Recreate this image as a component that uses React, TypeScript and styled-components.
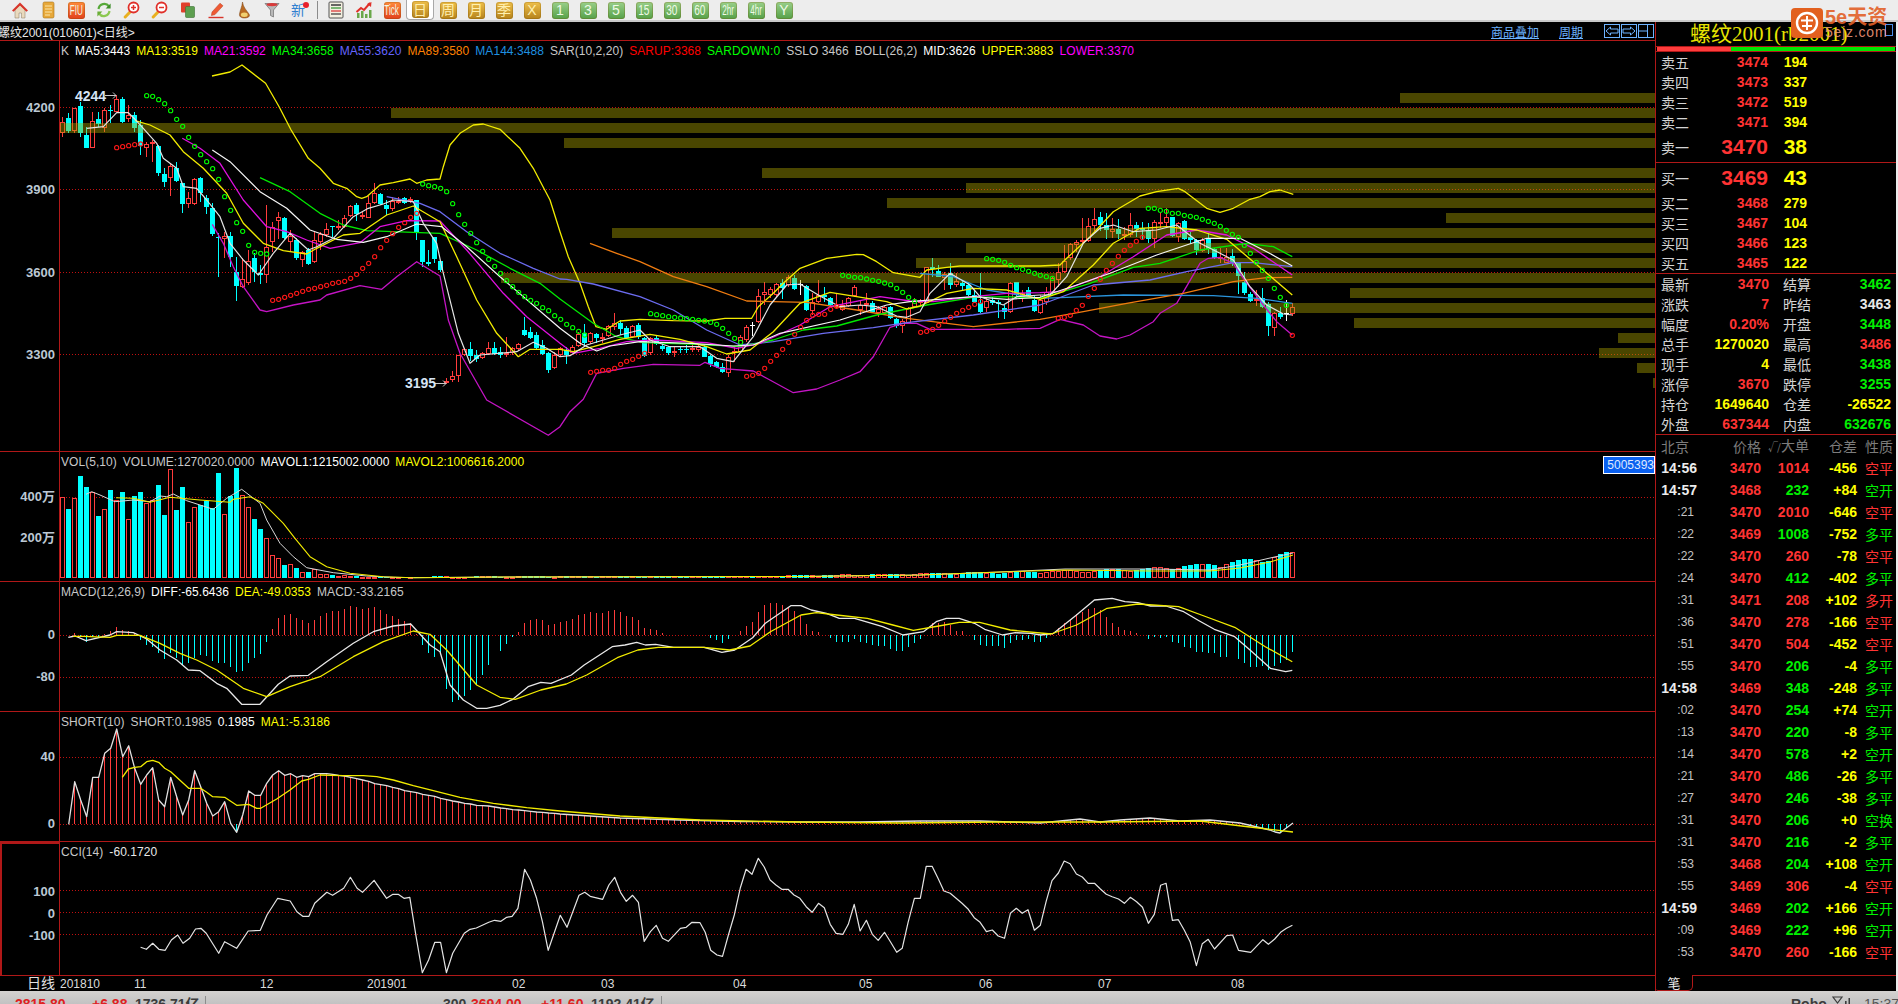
import React from "react";
import styled, { createGlobalStyle } from "styled-components";

/* ---------- data helpers ---------- */
type Pt = [number, number];
const conv = (flat: number[], ox: number, oy: number, sx = 3, sy = 3): Pt[] => {
  const out: Pt[] = [];
  for (let i = 0; i < flat.length; i += 2) out.push([ox + flat[i] / sx, oy + flat[i + 1] / sy]);
  return out;
};
const z7 = (f: number[]) => conv(f, 60, 80);
const z9 = (f: number[]) => conv(f, 540, 240);
const z8 = (f: number[]) => conv(f, 1000, 180);
const chain = (...segs: Pt[][]): Pt[] => {
  const out: Pt[] = [];
  segs.forEach((s) =>
    s.forEach((pt) => {
      if (!out.length || pt[0] > out[out.length - 1][0]) out.push(pt);
    })
  );
  return out;
};
const pstr = (p: Pt[]) => p.map(([x, y]) => `${x.toFixed(1)},${y.toFixed(1)}`).join(" ");
const interp = (s: Pt[], x: number) => {
  for (let i = 1; i < s.length; i++) {
    if (x <= s[i][0]) {
      const t = (x - s[i - 1][0]) / (s[i][0] - s[i - 1][0]);
      return s[i - 1][1] + t * (s[i][1] - s[i - 1][1]);
    }
  }
  return s[s.length - 1][1];
};

/* ---------- candles: type (1 red, 0 cyan, 2 white), top, bottom, high, low ---------- */
type C = [number, number, number, number, number];
const candlesA: C[] = [
  [1,125,158,110,170],[0,115,152,100,160],[1,85,152,85,160],[0,78,158,65,172],[0,165,203,140,203],[1,122,203,95,203],[0,118,133,95,140],[1,90,143,85,155],[0,91,93,75,130],[1,58,95,45,95],
  [0,58,125,50,128],[1,105,118,75,125],[0,105,143,95,155],[0,135,198,120,225],[1,193,205,185,232],[1,187,193,180,245],[0,198,278,195,288],[0,283,305,265,320],[1,258,295,250,347],[0,263,303,245,305],
  [0,310,373,310,398],[1,355,372,335,385],[1,298,372,295,375],[0,295,338,290,365],[0,353,381,345,402],[0,385,463,370,468],[0,471,473,458,590],[1,468,478,455,535],[0,468,530,455,560],[0,577,618,530,662],
  [1,597,622,535,625],[1,542,610,510,615],[0,535,575,520,605],[0,580,585,555,612],[1,500,585,375,608],[1,440,487,425,515],[1,410,422,395,478],[0,415,475,410,478],[1,468,485,450,515],[0,480,533,475,540],
  [1,515,540,512,560],[0,510,552,505,555],[1,480,545,455,550],[1,462,485,455,510],[1,447,465,430,470],[0,439,441,440,470],[1,438,442,420,450],[1,415,440,405,445],[1,378,407,375,410],[0,375,403,370,422],
  [1,405,410,395,418],[1,368,413,348,415],[1,340,370,310,372],[0,343,372,338,375],[0,375,387,360,405],[1,362,388,350,392],[1,362,367,350,372],[0,355,368,352,372],[1,358,362,352,368],[0,360,457,360,480],
  [0,480,545,480,560],[0,545,553,510,558],[0,472,538,470,550],[0,543,570,543,575],[1,903,910,895,913],[1,887,900,873,905],[1,825,887,825,905],[1,808,825,805,828],[0,808,828,785,843],[0,825,838,810,845],
  [1,818,835,815,838],[1,805,822,785,825],[0,803,822,785,825],[0,817,825,800,835],[1,818,822,770,830],[1,805,820,800,825],[1,793,807,790,812],[0,750,765,710,768],[0,757,773,740,778],[0,765,805,755,808],
  [0,795,822,780,825],[0,820,870,815,880],[1,825,865,815,868],
];
const candlesB: C[] = [
  [1,325,345,320,350],[0,330,345,320,372],[1,320,338,315,340],[1,282,318,275,320],[0,278,310,252,315],[1,280,305,275,312],[0,282,295,278,310],[1,290,295,280,310],[1,258,288,255,292],[1,248,262,220,270],
  [0,248,268,240,285],[0,265,295,258,298],[1,258,290,255,293],[0,255,292,250,298],[0,295,347,290,352],[1,295,340,290,345],[0,295,312,285,315],[0,318,326,310,332],[0,320,340,318,345],[1,332,335,318,350],
  [0,327,329,318,340],[0,327,329,315,340],[1,325,330,305,335],[1,320,330,315,335],[0,320,350,315,352],[0,348,372,345,380],[0,367,380,362,385],[0,382,395,370,398],[1,352,398,345,410],[1,332,340,320,365],
  [1,292,335,285,340],[1,262,300,255,305],[2,256,258,245,287],[1,168,245,148,248],[1,155,165,125,195],[1,148,165,140,175],[1,132,165,130,170],[0,130,145,118,178],[1,110,135,105,140],[0,115,148,105,150],
  [2,131,133,120,165],[0,138,210,136,212],[1,185,212,160,225],[1,165,185,120,190],[0,165,170,142,185],[0,175,195,172,200],[1,195,200,160,208],[1,195,210,180,212],[1,175,198,170,200],[1,142,168,135,172],
  [1,195,210,180,225],[1,188,192,158,215],[0,190,215,182,218],[1,208,220,198,232],[1,202,218,198,222],[0,202,235,198,238],[0,238,257,235,265],[1,242,258,238,278],[1,204,248,200,250],[1,182,202,175,205],
  [1,182,188,178,200],[1,82,188,80,190],[0,82,87,55,110],[0,93,110,75,112],[1,103,115,95,150],[0,100,135,70,148],[1,122,135,100,140],[0,130,137,120,152],[0,135,165,125,168],[0,165,187,150,190],
  [0,190,217,100,220],[1,182,205,170,215],[0,180,190,170,195],[0,185,192,180,235],[0,203,215,195,237],[1,130,215,125,218],[0,127,165,125,168],[1,160,170,150,185],[0,150,165,140,172],[0,180,212,165,215],
];
const candlesC: C[] = [
  [1,360,398,345,402],[1,335,365,320,375],[1,295,340,290,345],[1,277,300,250,320],[1,243,277,195,280],[1,192,235,188,240],[1,185,195,180,215],[1,180,187,115,190],[1,138,183,115,185],[1,118,138,85,152],
  [0,112,135,95,152],[0,135,150,100,177],[1,147,155,115,175],[0,148,163,118,178],[1,162,167,140,180],[1,136,165,100,172],[0,135,148,125,170],[0,145,150,125,180],[0,150,178,130,190],[1,126,176,120,205],
  [1,125,130,100,145],[1,110,130,85,140],[0,112,168,110,170],[1,130,172,125,185],[0,122,178,120,180],[0,172,180,155,190],[0,180,210,178,225],[1,180,212,175,215],[0,175,207,160,222],[0,208,235,203,238],
  [1,232,238,205,248],[1,230,248,205,250],[0,228,250,208,258],[0,250,288,248,342],[0,305,340,275,345],[0,342,363,335,365],[1,358,362,330,378],[0,355,382,325,385],[0,372,438,365,468],[1,400,443,395,468],
  [0,398,410,380,418],[2,400,402,360,422],[1,382,402,370,408],
];
const candles = [
  ...candlesA.map((c) => ({ t: c[0], a: 80 + c[1] / 3, b: 80 + c[2] / 3, h: 80 + c[3] / 3, l: 80 + c[4] / 3 })),
  ...candlesB.map((c) => ({ t: c[0], a: 240 + c[1] / 3, b: 240 + c[2] / 3, h: 240 + c[3] / 3, l: 240 + c[4] / 3 })),
  ...candlesC.map((c) => ({ t: c[0], a: 180 + c[1] / 3, b: 180 + c[2] / 3, h: 180 + c[3] / 3, l: 180 + c[4] / 3 })),
];

/* volume-at-price rows: [top, left] */
const bars: Pt[] = [
  [93, 1400], [108, 391], [123, 60], [138, 564], [168, 762], [183, 966], [198, 887], [213, 1446], [228, 612], [243, 966],
  [258, 916], [273, 501], [288, 1350], [303, 1099], [318, 1354], [333, 1618], [348, 1599], [363, 1637], [378, 1653],
];

const upper = chain(
  [[212, 76], [230, 72], [242, 65]],
  conv([490, 250, 515, 320, 537, 390], 0, 0, 1.845, 3),
  z7([640,45,680,125,745,235,780,265,820,310,860,325,890,350,905,355,920,350,960,315,1000,308,1050,297,1070,310,1100,300,1140,297,1150,260,1170,195,1200,160,1240,135,1270,132,1320,148,1380,205,1420,265,1470,360,1500,455]),
  z9([85,50,120,130,145,200,168,260,200,268,240,243,300,238,400,242,500,243,555,235,635,235,655,200,700,160,730,130,780,85,860,55,950,43,970,44,1010,65,1060,98,1140,112,1160,90,1220,82,1260,78,1400,78,1500,78]),
  z8([180,255,200,235,270,170,340,95,420,48,470,35,535,25,555,35,620,85,660,97,700,85,750,58,780,50,810,35,840,30,880,43])
);
const lower = chain(
  z7([457,433,490,490,520,560,550,620,600,690,620,695,700,675,780,660,800,645,900,617,965,628,1010,590,1070,545,1140,588,1150,640,1165,720,1200,820,1280,960]),
  z9([25,586,60,560,90,515,130,478,170,400,250,385,340,373,480,376,495,367,540,385,640,393,680,415,760,458,830,447,900,420,960,395,1000,350,1050,262,1090,250,1130,250,1170,268,1300,268,1400,268,1500,265]),
  z8([180,418,250,435,300,468,350,477,390,465,460,425,480,400,530,370,600,250,625,235,660,232,700,250,730,295,790,375,830,425,877,465])
);
const ma5 = chain(
  z7([80,145,130,140,170,98,205,98,225,118,250,145,290,190,310,235,350,265,370,320,410,325,440,360,480,410,510,490,550,540,595,585,640,520,690,460,745,510,770,500,820,475,880,410,925,385,970,372,1000,360,1060,365,1090,430,1130,490,1145,560,1165,640,1195,760,1230,850,1260,825,1370,815,1420,787,1460,805,1500,830]),
  z9([40,332,90,347,140,315,240,285,300,270,330,300,390,320,480,320,530,355,580,365,640,290,690,195,740,135,780,132,840,168,900,200,960,195,1010,200,1070,228,1100,232,1140,215,1170,160,1230,100,1290,135,1320,170,1390,195,1430,170,1500,165]),
  z8([150,345,200,290,250,190,300,145,340,135,400,155,470,150,530,135,600,190,660,220,700,240,750,320,800,375,850,402,877,405])
);
const ma13 = chain(
  z7([225,122,270,135,330,165,370,215,430,265,500,340,550,430,610,490,670,512,740,522,770,505,850,465,900,460,980,405,1060,378,1140,425,1190,530,1250,660,1310,760,1375,830,1410,808,1500,808]),
  z9([100,335,160,320,240,298,330,283,420,298,500,320,560,342,630,330,700,275,780,190,870,157,950,170,1040,185,1100,207,1140,198,1220,160,1300,145,1400,150,1500,178]),
  z8([190,335,280,255,340,190,420,145,500,140,590,150,680,178,760,245,877,345])
);
const ma21 = chain(
  z7([367,175,420,205,480,250,550,360,620,440,680,455,740,480,810,505,900,488,960,440,1040,422,1140,423,1220,510,1330,640,1400,710,1500,790]),
  z9([60,320,100,340,180,325,260,305,340,300,440,305,500,308,590,325,660,310,780,255,870,200,960,182,1020,170,1110,183,1180,185,1300,170,1400,160,1500,158]),
  z8([180,335,300,290,400,230,500,165,590,150,680,165,760,205,877,285])
);
const ma34 = chain(
  z7([600,293,690,335,780,400,850,435,920,452,1060,457,1140,460,1250,510,1350,565,1440,610,1500,657]),
  z9([60,185,160,250,230,290,310,308,450,312,600,320,700,300,790,270,890,258,1010,225,1160,195,1300,172,1400,170,1500,175]),
  z8([270,310,400,262,480,250,600,210,740,190,820,200,877,230])
);
const ma55 = chain(
  z7([980,350,1080,370,1140,395,1220,455,1320,520,1420,565,1500,597]),
  z9([80,118,160,132,300,170,400,210,500,270,600,315,700,305,850,280,1000,263,1100,248,1300,225,1500,195]),
  z8([280,315,450,300,560,275,700,248,760,248,877,260])
);
const ma89 = chain(
  z9([150,10,230,40,300,65,400,110,500,140,620,183,800,187,950,210,1100,235,1300,260,1500,238]),
  z8([250,395,380,370,550,340,700,305,800,293,877,292])
);
const ma144 = chain(
  z9([1140,100,1240,110,1340,150,1500,175]),
  z8([200,352,370,345,640,347,770,355,877,370])
);
const mid = chain(
  z7([457,210,510,245,600,335,680,385,750,450,830,478,910,487,980,470,1070,432,1145,440,1220,500,1320,590,1500,745]),
  z9([60,270,120,310,170,333,210,318,300,305,450,310,580,318,640,315,720,280,900,240,1040,195,1110,185,1300,170,1400,178,1500,172]),
  z8([230,315,330,280,470,225,620,175,720,175,800,215,877,258])
);
const sarGreen: Pt[] = [
  ...z7([260,47,278,49,296,59,314,71,332,92,350,118,368,139,386,172,404,199,422,224,440,245,458,266,476,298,494,350,512,391,530,428,548,454,566,496,584,517,602,520,620,522]),
  ...z7([1088,312,1106,317,1124,320,1142,325,1160,335,1178,371,1196,404,1214,433,1232,460,1250,488,1268,514,1286,538,1304,559,1322,580,1340,602,1358,620,1376,637,1394,650,1412,661,1430,670]),
  ...z9([8,203,26,212,44,227,62,238,80,253,98,263,116,274,134,285]),
  ...z9([332,221,350,224,368,227,386,230,404,232,422,234,440,236,458,238,476,241,494,243,512,247,530,253,548,265,566,280,584,295,602,307]),
  ...z9([908,106,926,109,944,112,962,113,980,117,998,121,1016,124,1034,129,1052,134,1070,145,1088,157,1106,172,1124,184]),
  ...z9([1340,56,1358,58,1376,61,1394,67,1412,76,1430,83,1448,88,1466,94,1484,100]),
  ...z8([121,286,139,290,157,295]),
  ...z8([445,85,463,85,481,91,499,94,517,100,535,100,553,106,571,109,589,112,607,118,625,124,643,130,661,139,679,151,697,163,715,172,733,196,751,220,769,247,787,271,805,295,823,325,841,352,859,376]),
];
const sarRed: Pt[] = [
  ...z7([170,203,188,200,206,197,224,194,242,192]),
  ...z7([638,661,656,658,674,652,692,646,710,640,728,634,746,628,764,625,782,620,800,616,818,610,836,607,854,604,872,595,890,583,908,565,926,550,944,530,962,503,980,481,998,461,1016,442,1034,428,1052,412,1070,400]),
  ...z9([152,397,170,394,188,391,206,391,224,385,242,373,260,364,278,358,296,349,314,340]),
  ...z9([620,409,638,406,656,400,674,385,692,364,710,346,728,328,746,307,764,283,782,262,800,241,818,226,836,223,854,223,872,208,890,199]),
  ...z9([1142,277,1160,274,1178,268,1196,256,1214,244,1232,232,1250,220,1268,211,1286,202,1304,193,1322,184]),
  ...z8([175,415,193,412,211,406,229,391,247,376,265,349,283,325,301,298,319,271,337,250,355,229,373,211,391,196,409,184,427,172,877,466]),
];

/* volume */
const volTops = [172,207,175,108,141,155,228,208,150,180,156,238,168,156,190,181,135,225,88,210,141,247,202,195,182,205,99,222,168,84,166,202,237,267,295,345,355,375,372,385,396,396,388,402,402,405,407,405,407,409];
const volProfile = chain([[50,1],[110,1.5],[130,3],[160,6],[180,9],[195,16],[205,25]]);
const volBars = candles.map((c, i) => {
  const base = 577.6;
  let top: number;
  if (i < volTops.length) top = 440 + volTops[i] / 3;
  else {
    const jit = 0.7 + 0.35 * Math.abs(Math.sin(i * 12.9898));
    top = base - Math.max(1, interp(volProfile, i) * jit);
  }
  return { t: c.t === 1 ? 1 : 0, x: 60 + 6 * i, top, base };
});
const volMa5 = chain(
  conv([258,163,275,155,300,165,345,185,400,180,450,185,480,168,500,170,520,162,560,182,600,195,640,208,680,175,725,148,780,190,800,240,840,310,880,350,920,383,1000,398,1100,408,1180,412,1240,413], 0, 440),
  [[500,577],[800,576.5],[920,575],[1000,572],[1065,569],[1150,569],[1210,570],[1240,565],[1270,558],[1293,553]]
);
const volMa10 = chain(
  conv([348,173,400,175,450,187,510,172,600,180,690,187,700,178,750,170,790,190,850,250,885,295,930,350,980,380,1050,400,1150,410,1240,413], 0, 440),
  [[500,577],[800,576.5],[920,575],[1000,572],[1065,570],[1150,571],[1210,571],[1240,568],[1270,562],[1293,555]]
);

/* MACD */
const macdHist: Pt[] = [
  ...conv([222,580,240,590,258,605,276,592,294,592,312,583,330,574,348,562,366,571,384,573,402,580,420,600,438,614,456,620,474,640,492,658,510,640,528,655,546,675,564,670,582,655,600,645,618,648,636,662,654,668,672,668,690,680,708,695,726,692,744,668,762,654,780,641,798,605,816,567,834,534,852,525,870,522,888,534,906,540,924,549,942,540,960,528,978,519,996,514,1014,513,1032,507,1050,498,1068,501,1086,507,1104,504,1122,501,1140,510,1158,522,1176,528,1194,537,1212,543,1230,550,1248,582,1266,616,1284,640,1302,652,1320,640,1338,746,1356,785,1374,780,1392,767,1410,750,1428,735,1446,705,1464,675], 0, 440),
  ...conv([1,183,13,162,25,140,37,126,48,100,60,90,72,87,84,90,96,105,107,103,119,96,131,94,143,87,154,75,166,72,178,67,190,70,202,68,213,63,225,60,237,67,249,78,260,82,272,90,284,113,296,116,307,120,319,130,412,145,424,150,436,158,448,147,470,122,482,107,494,95,506,65,518,45,530,40,542,40,554,45,566,50,578,62,590,75,600,102,612,122,624,125,648,143,660,157,672,155,684,157,695,148,706,157,718,160,730,166,742,167,754,167,766,178,778,183,790,183,800,170,812,160,824,147,848,100,860,100,872,97,884,105,895,122,907,122,930,150,942,166,954,167,965,167,977,167,989,174,1001,160,1012,150,1024,150,1036,148,1048,155,1060,155,1070,143,1084,130,1096,115,1108,100,1120,90,1132,72,1144,65,1152,58,1164,55,1176,60,1188,80,1200,100,1212,112,1224,120,1236,122,1248,130,1272,147,1284,142,1296,145,1308,140,1320,155,1332,158,1344,170,1356,175,1368,187,1380,187,1392,190,1402,190,1414,200,1426,200,1448,208,1460,218,1472,232,1484,232,1496,228,1508,240,1520,228,1532,220,1544,210,1556,187], 500, 590, 1.96, 3),
];
const macdW = chain(
  conv([205,592,225,588,258,602,330,585,350,575,400,578,440,597,480,630,530,660,565,690,600,692,650,730,680,745,725,793,780,793,835,733,870,708,925,706,980,665,1060,610,1120,575,1180,558,1232,552,1290,615,1320,635,1350,735,1390,780,1430,805,1460,805,1500,796], 0, 440),
  conv([25,328,55,290,80,277,100,280,140,255,165,225,220,170,245,165,268,157,285,165,305,163,340,172,400,172,435,187,460,180,495,143,520,100,570,47,590,47,610,60,640,70,665,85,695,85,750,110,790,135,830,125,855,95,875,85,900,85,930,100,950,118,985,135,1010,128,1040,130,1060,135,1085,130,1130,75,1165,30,1200,25,1225,35,1250,38,1275,48,1305,48,1340,65,1370,92,1400,118,1440,140,1470,180,1510,235,1540,245,1553,241], 500, 590, 1.96, 3)
);
const macdY = chain(
  conv([220,589,250,589,330,592,350,586,420,586,480,610,540,640,590,660,650,690,730,745,800,770,870,740,960,710,1060,650,1150,605,1240,573,1290,583,1340,630,1430,735,1500,772], 0, 440),
  conv([30,328,80,300,130,282,170,255,230,203,270,180,310,172,400,172,450,180,490,168,530,125,590,75,620,68,660,75,720,85,770,105,810,121,860,108,900,97,940,97,1000,120,1080,132,1130,105,1190,55,1250,42,1330,50,1380,78,1440,112,1500,170,1553,215], 500, 590, 1.96, 3)
);

/* SHORT */
const shortBase = 824;
const shortW = chain(
  conv([26,328,44,200,62,255,80,305,98,187,116,187,134,115,152,100,170,42,188,125,206,92,224,160,242,208,260,180,278,158,296,255,314,275,332,187,350,245,368,300,386,255,404,167,422,215,440,265,458,303,476,290,494,260,512,325,530,352,548,300,566,228,584,241,602,241,620,205,638,180,656,167,674,181,692,176,710,187,728,182,746,185,764,176,782,176,800,176,818,178,836,181,854,183,872,187,890,191,908,195,926,199,944,206,962,209,980,212,998,217,1016,221,1034,227,1052,230,1070,233,1088,238,1106,241,1124,244,1142,250,1160,254,1178,258,1196,261,1214,265,1232,267,1250,271,1268,272,1286,273,1304,276,1322,279,1340,281,1358,284,1376,285,1394,287,1412,289,1430,291,1448,292,1466,294,1484,295,1500,297], 60, 715),
  [[620,818],[680,820],[740,821.5],[800,822],[860,822],[920,821],[980,821],[1040,823],[1060,821],[1080,819],[1100,822],[1120,820],[1150,818],[1180,821],[1210,820],[1240,823],[1270,830],[1275,832],[1280,833],[1285,829],[1293,823]]
);
const shortY = chain(
  conv([187,187,205,162,224,157,242,155,260,140,278,136,296,142,314,160,332,170,350,187,386,220,422,220,440,232,458,245,494,247,530,271,566,268,590,280,602,280,650,252,690,225,725,198,745,193,780,180,850,182,910,182,950,185,1000,195,1060,212,1120,227,1200,247,1300,265,1400,278,1500,288], 60, 715),
  [[620,816],[700,820],[800,822],[900,823],[1000,822],[1100,822],[1200,821],[1250,827],[1293,832]]
);
const shortBars = candles
  .map((_, i) => 62 + 6 * i)
  .filter((x) => x >= shortW[0][0] + 2)
  .map((x) => ({ x, y: interp(shortW, x + 0.5) }));

/* CCI */
const cci = chain(
  conv([315,322,328,328,342,310,356,328,370,331,384,300,398,285,410,310,425,295,438,267,450,265,462,280,490,340,503,305,530,325,556,273,583,271,598,225,622,175,650,183,665,215,678,229,692,229,705,190,732,157,745,166,770,145,785,112,800,145,812,157,838,121,866,175,880,163,892,163,905,175,918,172,932,290,946,398,960,360,974,307,987,307,1000,398,1014,340,1040,280,1053,268,1067,264,1095,247,1108,241,1122,244,1135,232,1147,229,1160,205,1175,88,1188,120,1202,175,1215,245,1228,331,1255,226,1270,262,1297,166,1310,157,1322,169,1350,178,1364,135,1377,112,1390,157,1403,184,1417,166,1430,187,1443,304,1457,275,1470,256,1484,295,1497,304,1524,265,1537,262,1550,247,1568,248], 0, 840, 2.24, 3),
  conv([155,262,168,316,183,330,196,334,210,270,224,210,238,130,252,73,266,88,281,40,295,66,309,105,323,120,337,133,352,133,366,150,380,160,395,185,409,202,424,175,438,188,452,238,466,265,482,268,495,238,509,178,523,258,538,226,552,268,566,286,581,262,595,290,610,322,623,310,637,232,652,160,666,160,680,64,694,64,708,100,722,138,737,145,751,160,765,175,780,193,794,218,808,232,823,260,837,255,851,273,866,280,880,205,894,190,908,205,922,194,937,256,951,241,965,170,979,107,994,84,1008,48,1022,56,1037,87,1051,96,1065,115,1080,115,1094,132,1108,148,1122,155,1137,162,1151,175,1165,157,1180,170,1194,187,1208,235,1222,208,1237,121,1250,115,1265,226,1279,224,1293,255,1307,290,1322,362,1336,296,1350,283,1365,312,1394,272,1408,270,1422,316,1451,322,1480,284,1493,298,1508,282,1522,262,1536,250,1550,241], 640, 845, 2.376, 3)
);

/* right panel data */
const asks = [["卖五", "3474", "194"], ["卖四", "3473", "337"], ["卖三", "3472", "519"], ["卖二", "3471", "394"]];
const bids = [["买二", "3468", "279"], ["买三", "3467", "104"], ["买四", "3466", "123"], ["买五", "3465", "122"]];
type Tone = "r" | "y" | "g" | "w";
const stats: [string, string, Tone, string, string, Tone][] = [
  ["最新", "3470", "r", "结算", "3462", "g"],
  ["涨跌", "7", "r", "昨结", "3463", "w"],
  ["幅度", "0.20%", "r", "开盘", "3448", "g"],
  ["总手", "1270020", "y", "最高", "3486", "r"],
  ["现手", "4", "y", "最低", "3438", "g"],
  ["涨停", "3670", "r", "跌停", "3255", "g"],
  ["持仓", "1649640", "y", "仓差", "-26522", "y"],
  ["外盘", "637344", "r", "内盘", "632676", "g"],
];
const ticks: [string, string, string, Tone, string, string, Tone][] = [
  ["14:56", "3470", "1014", "r", "-456", "空平", "r"],
  ["14:57", "3468", "232", "g", "+84", "空开", "g"],
  [":21", "3470", "2010", "r", "-646", "空平", "r"],
  [":22", "3469", "1008", "g", "-752", "多平", "g"],
  [":22", "3470", "260", "r", "-78", "空平", "r"],
  [":24", "3470", "412", "g", "-402", "多平", "g"],
  [":31", "3471", "208", "r", "+102", "多开", "r"],
  [":36", "3470", "278", "r", "-166", "空平", "r"],
  [":51", "3470", "504", "r", "-452", "空平", "r"],
  [":55", "3470", "206", "g", "-4", "多平", "g"],
  ["14:58", "3469", "348", "g", "-248", "多平", "g"],
  [":02", "3470", "254", "g", "+74", "空开", "g"],
  [":13", "3470", "220", "g", "-8", "多平", "g"],
  [":14", "3470", "578", "g", "+2", "空开", "g"],
  [":21", "3470", "486", "g", "-26", "多平", "g"],
  [":27", "3470", "246", "g", "-38", "多平", "g"],
  [":31", "3470", "206", "g", "+0", "空换", "g"],
  [":31", "3470", "216", "g", "-2", "多平", "g"],
  [":53", "3468", "204", "g", "+108", "空开", "g"],
  [":55", "3469", "306", "r", "-4", "空平", "r"],
  ["14:59", "3469", "202", "g", "+166", "空开", "g"],
  [":09", "3469", "222", "g", "+96", "空开", "g"],
  [":53", "3470", "260", "r", "-166", "空平", "r"],
];
const toneColor: Record<Tone, string> = { r: "#ff3333", y: "#ffff00", g: "#00f000", w: "#e8e8e8" };
const dateLabels: [number, string][] = [[60, "201810"], [134, "11"], [260, "12"], [367, "201901"], [512, "02"], [601, "03"], [733, "04"], [859, "05"], [979, "06"], [1098, "07"], [1231, "08"]];

/* ---------- styles ---------- */
const RED = "#b01818";
const Global = createGlobalStyle`
  html, body { margin: 0; padding: 0; background: #ebebeb; overflow: hidden; }
  * { box-sizing: border-box; }
`;
const Root = styled.div`
  width: 1898px; height: 1004px; display: flex; flex-direction: column; position: relative; overflow: hidden;
  font-family: "Liberation Sans", "Noto Sans CJK SC", sans-serif; background: #ebebeb;
`;
const Toolbar = styled.header`
  height: 22px; flex: none; display: flex; align-items: flex-start; padding-left: 6px;
  background: #ededed; border-bottom: 2px solid #c9c9c9;
`;
const ToolCell = styled.div<{ $on?: boolean }>`
  width: 28px; height: 20px; flex: none; display: flex; align-items: center; justify-content: center;
  ${(p) => (p.$on ? "background:#fff; border:1px solid #a8a8a8; border-top:none; border-radius:0 0 4px 4px;" : "")}
`;
const ToolDivider = styled.div`
  width: 8px; flex: none; position: relative; height: 20px;
  &::after { content: ""; position: absolute; left: 3px; top: 1px; bottom: 1px; width: 1px; background: #8c8c8c; }
`;
const Tile = styled.span<{ $tone: "gold" | "green" | "orange" }>`
  width: 17px; height: 17px; border-radius: 3px; display: flex; align-items: center; justify-content: center;
  font-size: 14px; line-height: 1; white-space: nowrap; overflow: hidden;
  color: ${(p) => (p.$tone === "gold" ? "#fff0b0" : "#effae6")};
  background: ${(p) =>
    p.$tone === "gold"
      ? "linear-gradient(#eebf4a,#b5831c)"
      : p.$tone === "green"
      ? "linear-gradient(#9ad08a,#55a048)"
      : "linear-gradient(#ff8a3c,#e2401c)"};
  box-shadow: inset 0 0 0 1px rgba(120, 80, 0, 0.25);
`;
const TileText = styled.span<{ $n: number }>`
  display: inline-block; flex: none;
  transform: scaleX(${(p) => (p.$n >= 3 ? 0.58 : p.$n === 2 ? 0.72 : 1)});
`;
const NewGlyph = styled.span`
  position: relative; font-size: 14px; line-height: 1; color: #2f7fd0; width: 18px; text-align: left;
  &::after { content: ""; position: absolute; right: 0; top: -1px; width: 6px; height: 6px; border-radius: 50%; background: #e8202a; }
`;
const Workspace = styled.main`
  height: 969px; flex: none; display: flex; padding-right: 2px; background: #ebebeb;
`;
const ChartColumn = styled.div`
  width: 1655px; flex: none; display: flex; flex-direction: column; background: #000;
`;
const TitleRow = styled.div`
  height: 19px; flex: none; display: flex; align-items: center; border-bottom: 1px solid ${RED};
  color: #e8e8e8; font-size: 12px; white-space: nowrap;
`;
const TitleText = styled.span`flex: 1; padding-top: 1px; margin-left: -2px;`;
const LinkText = styled.a<{ $w: number }>`
  width: ${(p) => p.$w}px; color: #6db3ff; text-decoration: underline; font-size: 12px;
`;
const NavButtons = styled.div`display: flex; gap: 1px; margin-right: 1px;`;
const NavButton = styled.span`
  width: 16px; height: 14px; border: 1px solid #6db3ff; display: flex; align-items: center; justify-content: center;
`;
const Pane = styled.section<{ $h: number }>`
  height: ${(p) => p.$h}px; flex: none; display: flex; border-bottom: 1px solid ${RED};
`;
const AxisCol = styled.div<{ $active?: boolean }>`
  width: 60px; flex: none; position: relative;
  border-right: 1px solid ${RED};
  ${(p) => (p.$active ? `border: 2px solid ${RED}; border-bottom: 0; border-right-width: 1px;` : "")}
`;
const AxisLabel = styled.span`
  position: absolute; right: 4px; transform: translateY(-50%);
  color: #bcc8d4; font: bold 13px/14px "Liberation Sans", "Noto Sans CJK SC", sans-serif; white-space: nowrap;
`;
const PlotCell = styled.div`flex: 1; position: relative; overflow: hidden; min-width: 0;`;
const PlotSvg = styled.svg`display: block; width: 100%; height: 100%; position: absolute; inset: 0;`;
const Legend = styled.div`
  position: absolute; left: 1px; top: 2px; display: flex; gap: 6px; font-size: 12px; line-height: 16px; white-space: nowrap; z-index: 1;
`;
const LegendItem = styled.span<{ $c: string }>`color: ${(p) => p.$c}; letter-spacing: 0.05px;`;
const PriceMark = styled.div`
  position: absolute; color: #d6e4f4; font: bold 14px/16px "Liberation Sans", sans-serif;
`;
const DateRow = styled.div`
  height: 15px; flex: none; display: flex; color: #dcdcdc; font-size: 12px; line-height: 15px;
`;
const DateHead = styled.div`
  width: 60px; flex: none; text-align: right; padding-right: 5px; font-size: 14px; color: #e0e0e0;
`;
const DateTrack = styled.div`flex: 1; position: relative; overflow: hidden;`;
const DateTick = styled.span`position: absolute; top: 1px;`;
const VolumeTag = styled.div`
  position: absolute; right: 0; top: 4px; width: 52px; height: 18px; background: #0a60f0; border: 1px solid #fff;
  color: #dfe9ff; font-size: 12px; line-height: 16px; text-align: right; z-index: 2;
`;

const Panel = styled.aside`
  width: 241px; flex: none; display: flex; flex-direction: column; background: #000; border-left: 1px solid ${RED};
`;
const PanelTitle = styled.div`
  height: 24px; flex: none; display: flex; align-items: center; padding-left: 34px;
  color: #e8e400; font: 21px/24px "Liberation Serif", "Noto Sans CJK SC", serif; white-space: nowrap;
`;
const RatioBar = styled.div`
  height: 6px; flex: none; display: flex; border-top: 1px solid ${RED}; border-bottom: 1px solid ${RED}; padding: 0 1px;
`;
const RatioPart = styled.i<{ $c: string; $w: number }>`
  display: block; height: 100%; width: ${(p) => p.$w}px; background: ${(p) => p.$c};
`;
const BookRow = styled.div<{ $big?: boolean }>`
  height: ${(p) => (p.$big ? 30 : 20)}px; flex: none; display: grid; grid-template-columns: 28px 79px 39px; align-items: center;
  padding-left: 5px; font-weight: bold; font-size: ${(p) => (p.$big ? 21 : 14)}px;
`;
const CnLabel = styled.span<{ $c?: string; $pad?: number }>`
  font: 14px/20px "Noto Sans CJK SC", sans-serif; color: ${(p) => p.$c || "#d4d4d4"}; white-space: nowrap;
  padding-left: ${(p) => p.$pad || 0}px;
`;
const Num = styled.span<{ $c: string }>`
  text-align: right; color: ${(p) => p.$c}; font-weight: bold; font-family: "Liberation Sans", sans-serif; white-space: nowrap;
`;
const HRule = styled.div`height: 1px; flex: none; background: ${RED};`;
const StatRow = styled.div`
  height: 20px; flex: none; display: grid; grid-template-columns: 28px 80px 42px 80px; align-items: center; padding-left: 5px; font-size: 14px;
`;
const TickGrid = styled.div`
  display: grid; grid-template-columns: 41px 64px 48px 48px 36px; grid-auto-rows: 22px; align-items: center; font-size: 14px;
`;
const HeadCell = styled.span<{ $left?: boolean }>`
  color: #7c7c7c; font: 14px/22px "Noto Sans CJK SC", sans-serif; text-align: ${(p) => (p.$left ? "left" : "right")}; white-space: nowrap;
  padding-left: ${(p) => (p.$left ? 5 : 0)}px;
`;
const TinyMark = styled.span`font-size: 10px; letter-spacing: -1px; margin-right: 1px;`;
const TimeCell = styled.span<{ $bold: boolean }>`
  text-align: right; white-space: nowrap; color: ${(p) => (p.$bold ? "#ececec" : "#c4c4c4")};
  font-weight: ${(p) => (p.$bold ? "bold" : "normal")}; font-size: ${(p) => (p.$bold ? 14 : 12)}px;
  padding-right: ${(p) => (p.$bold ? 0 : 3)}px;
`;
const NatureCell = styled.span<{ $c: string }>`
  text-align: right; color: ${(p) => p.$c}; font: 14px/22px "Noto Sans CJK SC", sans-serif; white-space: nowrap;
`;
const TabBar = styled.div`
  margin-top: auto; height: 16px; flex: none; display: flex;
`;
const Tab = styled.div`
  width: 37px; flex: none; text-align: center; color: #e8e8e8; font: 13px/15px "Noto Sans CJK SC", sans-serif;
  border: 1px solid ${RED}; border-top: 0; border-left: 0; border-radius: 0 0 5px 2px;
`;
const TabRest = styled.div`flex: 1; border-top: 1px solid ${RED};`;

const Taskbar = styled.footer`
  height: 13px; flex: none; display: flex; overflow: hidden; padding-left: 15px; padding-top: 5px;
  background: linear-gradient(#d4d2d0, #c2c2c2);
  font-size: 14px; line-height: 16px; font-weight: bold; white-space: nowrap;
`;
const TaskCell = styled.span<{ $w: number; $c?: string }>`
  width: ${(p) => p.$w}px; flex: none; color: ${(p) => p.$c || "#3c3c3c"};
`;
const TaskSep = styled.i`width: 1px; height: 10px; background: #8c8c8c; flex: none;`;
const TaskGap = styled.span`flex: 1;`;
const TaskIcon = styled.span`width: 32px; flex: none; display: block;`;
const TaskClock = styled.span`width: 34px; flex: none; color: #555; font-weight: normal;`;

const Watermark = styled.div`
  position: absolute; left: 1791px; top: 8px; display: flex; gap: 2px; z-index: 5; pointer-events: none;
`;
const WmTexts = styled.div`display: flex; flex-direction: column; line-height: 1;`;
const WmBig = styled.span`color: rgba(226, 96, 40, 0.92); font-size: 20px; line-height: 18px; font-family: "Liberation Sans", "Noto Sans CJK SC", sans-serif; white-space: nowrap; font-weight: bold;`;
const WmSmall = styled.span`color: rgba(240, 150, 120, 0.9); font-size: 14px; line-height: 12px; letter-spacing: 0.8px; white-space: nowrap;`;
const CornerIcon = styled.span`
  position: absolute; left: 1885px; top: 24px; width: 8px; height: 12px; border: 1px solid #4a90e8; z-index: 4;
`;

/* ---------- icons ---------- */
const Ico = ({ children }: { children: React.ReactNode }) => (
  <svg width="18" height="18" viewBox="0 0 18 18">{children}</svg>
);
const IconHome = () => (
  <Ico>
    <path d="M4 9v8h4v-5h2.5v5H14V9L9 4z" fill="#e9d9bd" stroke="#8a7a60" strokeWidth=".5" />
    <path d="M1 9.5 9 1.5l8 8-1.6 1.2L9 4.6 2.6 10.7z" fill="#d8342a" />
  </Ico>
);
const IconNote = () => (
  <Ico>
    <rect x="4" y="1" width="11" height="16" rx="1.5" fill="#e7a83a" stroke="#a8741c" strokeWidth=".6" />
    <path d="M6 5h7M6 8h7M6 11h7M6 14h5" stroke="#fbe6a8" strokeWidth="1" />
  </Ico>
);
const IconRefresh = () => (
  <Ico>
    <path d="M3.5 8A5.8 5.8 0 0 1 14 5.5" fill="none" stroke="#57a93a" strokeWidth="2.2" />
    <path d="M15.6 2.5v5h-5z" fill="#3f8f2a" />
    <path d="M14.5 10A5.8 5.8 0 0 1 4 12.5" fill="none" stroke="#8cc850" strokeWidth="2.2" />
    <path d="M2.4 15.5v-5h5z" fill="#6aae38" />
  </Ico>
);
const IconZoom = ({ plus }: { plus?: boolean }) => (
  <Ico>
    <path d="M7 11 2.2 16" stroke="#e9b020" strokeWidth="3" strokeLinecap="round" />
    <circle cx="10.5" cy="6.5" r="5" fill="#fff" stroke="#e0302a" strokeWidth="1.8" />
    <path d="M8 6.5h5" stroke="#e0302a" strokeWidth="1.5" />
    {plus ? <path d="M10.5 4v5" stroke="#e0302a" strokeWidth="1.5" /> : null}
  </Ico>
);
const IconCopy = () => (
  <Ico>
    <rect x="2" y="1.5" width="9" height="10" rx="1" fill="#e0402c" />
    <rect x="6.5" y="5.5" width="9" height="11" rx="1" fill="#5d9f50" stroke="#3c7034" strokeWidth=".6" />
  </Ico>
);
const IconPencil = () => (
  <Ico>
    <path d="M5 11 13 2.2l3 2.6-8 8.8-3.6 1z" fill="#ef5a34" stroke="#b23a1a" strokeWidth=".5" />
    <path d="M1.5 16.5h15" stroke="#d8342a" strokeWidth="1.4" />
  </Ico>
);
const IconHorn = () => (
  <Ico>
    <path d="M7.5 1 C8 6 12 10 14 13 c1.5 2.5-1 4-4.5 4-3.5 0-5.5-1.6-5-4C5 9 7 6 7.5 1z" fill="#b96a22" stroke="#7a4210" strokeWidth=".5" />
    <ellipse cx="9.3" cy="13.8" rx="3.4" ry="2.2" fill="#f0d070" />
  </Ico>
);
const IconFunnel = () => (
  <Ico>
    <path d="M2 2.5h14L10.5 9v7l-3-1.5V9z" fill="#b8b8b8" stroke="#6e6e6e" strokeWidth=".7" />
    <ellipse cx="9" cy="3.6" rx="5.5" ry="1.6" fill="#d83a3a" />
  </Ico>
);
const IconTable = () => (
  <Ico>
    <rect x="2" y="1" width="14" height="16" rx="1" fill="#f3efe0" stroke="#555" strokeWidth="1" />
    <path d="M4 4h10" stroke="#444" strokeWidth="1.6" />
    <path d="M4 7h10" stroke="#3a9a3a" strokeWidth="1.3" />
    <path d="M4 10h10" stroke="#d83a3a" strokeWidth="1.3" />
    <path d="M4 13h10" stroke="#444" strokeWidth="1.3" />
  </Ico>
);
const IconChart = () => (
  <Ico>
    <path d="M2 17v-5h2.5v5zM6 17v-7h2.5v7zM10 17v-4h2.5v4zM14 17V9h2.5v8z" fill="#6aa84a" />
    <path d="M1.5 11 6 7l3 2 6-7" fill="none" stroke="#e0302a" strokeWidth="2" />
    <path d="M16.5 1l-.5 5-4-3z" fill="#e0302a" />
  </Ico>
);
const ArrowLeft = () => (
  <svg width="14" height="10" viewBox="0 0 14 10"><path d="M5.5 1 1 5l4.5 4V7H13V3H5.5z" fill="none" stroke="#6db3ff" /></svg>
);
const ArrowRight = () => (
  <svg width="14" height="10" viewBox="0 0 14 10"><path d="M8.5 1 13 5 8.5 9V7H1V3h7.5z" fill="none" stroke="#6db3ff" /></svg>
);
const SplitIcon = () => (
  <svg width="14" height="12" viewBox="0 0 14 12"><path d="M8.5 0v12M0 6h8.5" fill="none" stroke="#6db3ff" /></svg>
);
const NetIcon = () => (
  <svg width="22" height="8" viewBox="0 0 22 8" style={{ display: "block" }}>
    <path d="M1 1h9L5.5 7z" fill="none" stroke="#3c3c3c" strokeWidth="1.2" />
    <path d="M13 8V5h1.6v3zM16.5 8V2H18v6z" fill="#3c3c3c" />
  </svg>
);

/* ---------- plot parts ---------- */
const Grid = ({ y }: { y: number[] }) => (
  <g stroke="#c01010" strokeWidth="1" strokeDasharray="1 2" shapeRendering="crispEdges">
    {y.map((v) => (
      <line key={v} x1="60" x2="1655" y1={v + 0.5} y2={v + 0.5} />
    ))}
  </g>
);
const Line = ({ s, c, w = 1.3 }: { s: Pt[]; c: string; w?: number }) => (
  <polyline points={pstr(s)} fill="none" stroke={c} strokeWidth={w} strokeLinejoin="round" />
);
const CandleSet = () => (
  <g shapeRendering="crispEdges">
    {candles.map((c, i) => {
      const x = 60 + 6 * i;
      const col = c.t === 1 ? "#ff3c3c" : c.t === 0 ? "#00ffff" : "#ffffff";
      const top = Math.round(c.a);
      const h = Math.max(1, Math.round(c.b) - top);
      return (
        <g key={i}>
          <rect x={x + 2} y={c.h} width="1" height={Math.max(1, c.l - c.h)} fill={col} />
          {c.t === 1 ? (
            <rect x={x + 0.5} y={top + 0.5} width="4" height={Math.max(1, h - 1)} fill="#000" stroke={col} />
          ) : (
            <rect x={x} y={top} width="5" height={h} fill={col} />
          )}
        </g>
      );
    })}
  </g>
);

const MainPlot = () => (
  <PlotSvg viewBox="60 41 1595 410" preserveAspectRatio="none">
    <Grid y={[107, 189, 272, 354]} />
    <CandleSet />
    <g fill="rgba(180,170,0,0.41)" shapeRendering="crispEdges">
      {bars.map(([y, x]) => (
        <rect key={y} x={x} y={y} width={1655 - x} height="10" />
      ))}
    </g>
    <Line s={upper} c="#f2ec00" />
    <Line s={lower} c="#c414c4" />
    <Line s={ma144} c="#2a94dc" />
    <Line s={ma89} c="#f07c10" />
    <Line s={ma55} c="#6c6cf0" />
    <Line s={ma34} c="#00e800" />
    <Line s={ma21} c="#e010e0" />
    <Line s={ma13} c="#f2ec00" />
    <Line s={mid} c="#f6f6f6" w={1.2} />
    <Line s={ma5} c="#e4e4e4" w={1.2} />
    <g fill="none" strokeWidth="1.1">
      {sarGreen.map(([x, y], i) => (
        <circle key={i} cx={x} cy={y} r="2.1" stroke="#00ff00" />
      ))}
      {sarRed.map(([x, y], i) => (
        <circle key={i} cx={x} cy={y} r="2.1" stroke="#ff1818" />
      ))}
    </g>
    <path d="M105 95.5h11M113 92.5l3 3-3 3" fill="none" stroke="#c8c8c8" />
    <path d="M435 383.5h11M443 380.5l3 3-3 3" fill="none" stroke="#c8c8c8" />
  </PlotSvg>
);
const VolPlot = () => (
  <PlotSvg viewBox="60 452 1595 129" preserveAspectRatio="none">
    <Grid y={[497, 538]} />
    <g shapeRendering="crispEdges">
      {volBars.map((b) =>
        b.t === 1 ? (
          <rect key={b.x} x={b.x + 0.5} y={Math.round(b.top) + 0.5} width="4" height={Math.max(0.5, b.base - Math.round(b.top) - 0.5)} fill="#000" stroke="#ff3c3c" />
        ) : (
          <rect key={b.x} x={b.x} y={b.top} width="5" height={b.base - b.top} fill="#00ffff" />
        )
      )}
    </g>
    <Line s={volMa5} c="#d8d8d8" w={1} />
    <Line s={volMa10} c="#f2ec00" w={1.1} />
  </PlotSvg>
);
const MacdPlot = () => (
  <PlotSvg viewBox="60 582 1595 129" preserveAspectRatio="none">
    <Grid y={[635, 677]} />
    <g shapeRendering="crispEdges">
      {macdHist.map(([x, y], i) => {
        const px = 62 + 6 * Math.round((x - 62.5) / 6);
        const up = y < 635;
        return <rect key={i} x={px} y={up ? y : 635} width="1" height={Math.abs(y - 635)} fill={up ? "#ff3c3c" : "#00ffff"} />;
      })}
    </g>
    <Line s={macdW} c="#e8e8e8" />
    <Line s={macdY} c="#f2ec00" />
  </PlotSvg>
);
const ShortPlot = () => (
  <PlotSvg viewBox="60 712 1595 129" preserveAspectRatio="none">
    <Grid y={[757, 824]} />
    <g shapeRendering="crispEdges">
      {shortBars.map(({ x, y }) => {
        const up = y < shortBase;
        return <rect key={x} x={x} y={up ? y : shortBase} width="1" height={Math.abs(y - shortBase)} fill={up ? "#ff3c3c" : "#00ffff"} />;
      })}
    </g>
    <Line s={shortW} c="#e0e0e0" />
    <Line s={shortY} c="#f2ec00" />
  </PlotSvg>
);
const CciPlot = () => (
  <PlotSvg viewBox="60 842 1595 133" preserveAspectRatio="none">
    <Grid y={[890, 912, 934]} />
    <Line s={cci} c="#e4e4e4" w={1.2} />
  </PlotSvg>
);

const tile = (tone: "gold" | "green" | "orange", t: string) => (
  <Tile $tone={tone}><TileText $n={t.length}>{t}</TileText></Tile>
);
const tools = [
  <IconHome />, <IconNote />, tile("orange", "FIU"), <IconRefresh />, <IconZoom plus />, <IconZoom />, <IconCopy />, <IconPencil />, <IconHorn />, <IconFunnel />, <NewGlyph>新</NewGlyph>,
];
const tools2 = [<IconTable />, <IconChart />, tile("orange", "Tick")];
const golds = ["日", "周", "月", "季", "X"];
const greens = ["1", "3", "5", "15", "30", "60", "2hr", "4hr", "Y"];

const mainLegend: [string, string][] = [
  ["K", "#c8c8c8"], ["MA5:3443", "#ffffff"], ["MA13:3519", "#ffff00"], ["MA21:3592", "#ff00ff"], ["MA34:3658", "#00ff00"], ["MA55:3620", "#6464ff"], ["MA89:3580", "#ff8000"], ["MA144:3488", "#1e90e0"],
  ["SAR(10,2,20)", "#c8c8c8"], ["SARUP:3368", "#ff0000"], ["SARDOWN:0", "#00ff00"], ["SSLO 3466", "#c8c8c8"], ["BOLL(26,2)", "#c8c8c8"], ["MID:3626", "#ffffff"], ["UPPER:3883", "#ffff00"], ["LOWER:3370", "#ff00ff"],
];
const LegendLine = ({ items }: { items: [string, string][] }) => (
  <Legend>
    {items.map(([t, c]) => (
      <LegendItem key={t} $c={c}>{t}</LegendItem>
    ))}
  </Legend>
);
const Axis = ({ top, items, active }: { top: number; items: [string, number][]; active?: boolean }) => (
  <AxisCol $active={active}>
    {items.map(([t, y]) => (
      <AxisLabel key={t} style={{ top: y - top }}>{t}</AxisLabel>
    ))}
  </AxisCol>
);

export default function App() {
  return (
    <Root>
      <Global />
      <Toolbar>
        {tools.map((t, i) => <ToolCell key={i}>{t}</ToolCell>)}
        <ToolDivider />
        {tools2.map((t, i) => <ToolCell key={i}>{t}</ToolCell>)}
        {golds.map((g, i) => (
          <ToolCell key={g} $on={i === 0}>{tile("gold", g)}</ToolCell>
        ))}
        {greens.map((g) => (
          <ToolCell key={g}>{tile("green", g)}</ToolCell>
        ))}
      </Toolbar>
      <Workspace>
        <ChartColumn>
          <TitleRow>
            <TitleText>螺纹2001(010601)&lt;日线&gt;</TitleText>
            <LinkText $w={68}>商品叠加</LinkText>
            <LinkText $w={45}>周期</LinkText>
            <NavButtons>
              <NavButton><ArrowLeft /></NavButton>
              <NavButton><ArrowRight /></NavButton>
              <NavButton><SplitIcon /></NavButton>
            </NavButtons>
          </TitleRow>
          <Pane $h={411}>
            <Axis top={41} items={[["4200", 108], ["3900", 190], ["3600", 273], ["3300", 355]]} />
            <PlotCell>
              <LegendLine items={mainLegend} />
              <MainPlot />
              <PriceMark style={{ left: 15, top: 47 }}>4244</PriceMark>
              <PriceMark style={{ left: 345, top: 334 }}>3195</PriceMark>
            </PlotCell>
          </Pane>
          <Pane $h={130}>
            <Axis top={452} items={[["400万", 497], ["200万", 538]]} />
            <PlotCell>
              <LegendLine items={[["VOL(5,10)", "#c8c8c8"], ["VOLUME:1270020.0000", "#c8c8c8"], ["MAVOL1:1215002.0000", "#ffffff"], ["MAVOL2:1006616.2000", "#ffff00"]]} />
              <VolPlot />
              <VolumeTag>5005393</VolumeTag>
            </PlotCell>
          </Pane>
          <Pane $h={130}>
            <Axis top={582} items={[["0", 635], ["-80", 677]]} />
            <PlotCell>
              <LegendLine items={[["MACD(12,26,9)", "#c8c8c8"], ["DIFF:-65.6436", "#ffffff"], ["DEA:-49.0353", "#ffff00"], ["MACD:-33.2165", "#c8c8c8"]]} />
              <MacdPlot />
            </PlotCell>
          </Pane>
          <Pane $h={130}>
            <Axis top={712} items={[["40", 757], ["0", 824]]} />
            <PlotCell>
              <LegendLine items={[["SHORT(10)", "#c8c8c8"], ["SHORT:0.1985", "#c8c8c8"], ["0.1985", "#ffffff"], ["MA1:-5.3186", "#ffff00"]]} />
              <ShortPlot />
            </PlotCell>
          </Pane>
          <Pane $h={134}>
            <Axis active top={842} items={[["100", 890], ["0", 912], ["-100", 934]]} />
            <PlotCell>
              <LegendLine items={[["CCI(14)", "#c8c8c8"], ["-60.1720", "#e8e8e8"]]} />
              <CciPlot />
            </PlotCell>
          </Pane>
          <DateRow>
            <DateHead>日线</DateHead>
            <DateTrack>
              {dateLabels.map(([x, t]) => (
                <DateTick key={t} style={{ left: x - 60 }}>{t}</DateTick>
              ))}
            </DateTrack>
          </DateRow>
        </ChartColumn>
        <Panel>
          <PanelTitle>螺纹2001(rb2001)</PanelTitle>
          <RatioBar>
            <RatioPart $c="#ff3c3c" $w={74} />
            <RatioPart $c="#00e600" $w={164} />
          </RatioBar>
          {asks.map(([l, p, v]) => (
            <BookRow key={l}>
              <CnLabel>{l}</CnLabel>
              <Num $c="#ff3333">{p}</Num>
              <Num $c="#ffff00">{v}</Num>
            </BookRow>
          ))}
          <BookRow $big>
            <CnLabel>卖一</CnLabel>
            <Num $c="#ff3333">3470</Num>
            <Num $c="#ffff00">38</Num>
          </BookRow>
          <HRule />
          <BookRow $big>
            <CnLabel>买一</CnLabel>
            <Num $c="#ff3333">3469</Num>
            <Num $c="#ffff00">43</Num>
          </BookRow>
          {bids.map(([l, p, v]) => (
            <BookRow key={l}>
              <CnLabel>{l}</CnLabel>
              <Num $c="#ff3333">{p}</Num>
              <Num $c="#ffff00">{v}</Num>
            </BookRow>
          ))}
          <HRule />
          {stats.map(([a, b, bc, c, d, dc]) => (
            <StatRow key={a}>
              <CnLabel>{a}</CnLabel>
              <Num $c={toneColor[bc]}>{b}</Num>
              <CnLabel $pad={14}>{c}</CnLabel>
              <Num $c={toneColor[dc]}>{d}</Num>
            </StatRow>
          ))}
          <HRule />
          <TickGrid>
            <HeadCell $left>北京</HeadCell>
            <HeadCell>价格</HeadCell>
            <HeadCell><TinyMark>√/</TinyMark>大单</HeadCell>
            <HeadCell>仓差</HeadCell>
            <HeadCell>性质</HeadCell>
            {ticks.map(([t, p, v, vc, d, n, nc], i) => (
              <React.Fragment key={i}>
                <TimeCell $bold={t.length > 3}>{t}</TimeCell>
                <Num $c="#ff3333">{p}</Num>
                <Num $c={toneColor[vc]}>{v}</Num>
                <Num $c="#ffff00">{d}</Num>
                <NatureCell $c={toneColor[nc]}>{n}</NatureCell>
              </React.Fragment>
            ))}
          </TickGrid>
          <TabBar>
            <Tab>笔</Tab>
            <TabRest />
          </TabBar>
        </Panel>
      </Workspace>
      <Taskbar>
        <TaskCell $w={77} $c="#e02020">2815.80</TaskCell>
        <TaskCell $w={43} $c="#e02020">+6.88</TaskCell>
        <TaskCell $w={70}>1736.71亿</TaskCell>
        <TaskSep />
        <TaskCell $w={237} />
        <TaskCell $w={28}>300</TaskCell>
        <TaskCell $w={70} $c="#e02020">3694.00</TaskCell>
        <TaskCell $w={50} $c="#e02020">+11.60</TaskCell>
        <TaskCell $w={70}>1192.41亿</TaskCell>
        <TaskSep />
        <TaskGap />
        <TaskCell $w={41}>Robo</TaskCell>
        <TaskIcon><NetIcon /></TaskIcon>
        <TaskClock>15:37</TaskClock>
      </Taskbar>
      <CornerIcon />
      <Watermark>
        <svg width="32" height="30" viewBox="0 0 32 30">
          <rect width="32" height="30" rx="4" fill="#e2601e" />
          <circle cx="16" cy="15" r="10" fill="none" stroke="#fff" strokeWidth="2.4" />
          <path d="M10 12.5h12M16 8v14M11 18h10" stroke="#fff" strokeWidth="2" fill="none" />
        </svg>
        <WmTexts>
          <WmBig>5e天资</WmBig>
          <WmSmall>5ejz.com</WmSmall>
        </WmTexts>
      </Watermark>
    </Root>
  );
}
